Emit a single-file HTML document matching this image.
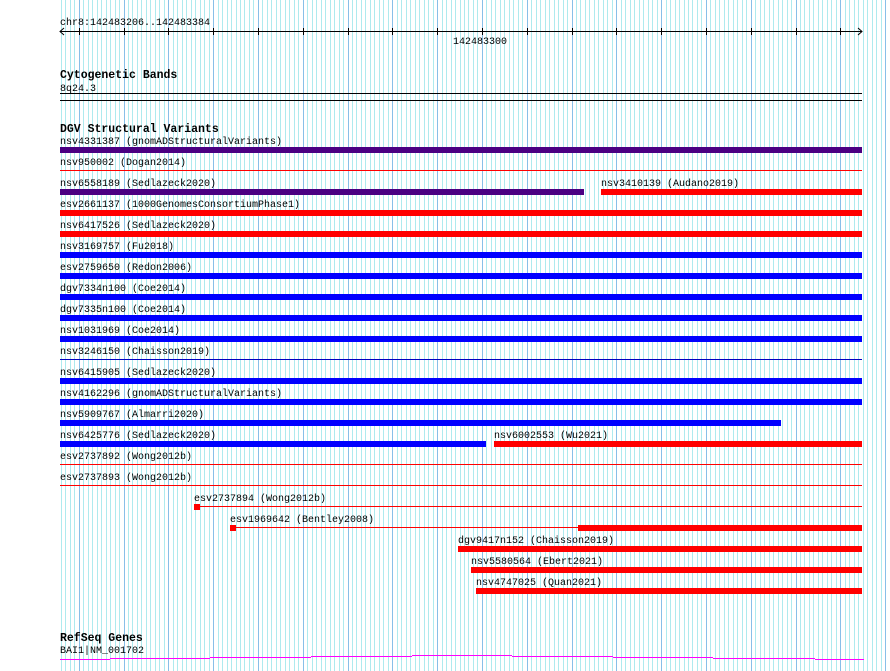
<!DOCTYPE html>
<html><head><meta charset="utf-8"><style>
html,body{margin:0;padding:0;background:#fff;}
svg{display:block;}
text{font-family:"Liberation Mono",monospace;font-size:10px;fill:#000;}
.h{font-weight:bold;font-size:11.5px;}
</style></head><body>
<svg id="s" width="890" height="671" xmlns="http://www.w3.org/2000/svg">
<g id="grid"></g>
<text x="60" y="25">chr8:142483206..142483384</text>
<line x1="60" y1="31.5" x2="862" y2="31.5" stroke="#000"/>
<polyline points="64,28 60,31.5 64,35" fill="none" stroke="#000"/>
<polyline points="858,28 862,31.5 858,35" fill="none" stroke="#000"/>
<g id="ticks"></g>
<text x="453" y="44">142483300</text>
<text class="h" x="60" y="78">Cytogenetic Bands</text>
<text x="60" y="91">8q24.3</text>
<rect x="60" y="93" width="802" height="1" fill="#000"/>
<rect x="60" y="100" width="802" height="1" fill="#000"/>
<text class="h" x="60" y="132">DGV Structural Variants</text>
<g id="rows"></g>
<text class="h" x="60" y="641">RefSeq Genes</text>
<text x="60" y="653">BAI1|NM_001702</text>
<g fill="#f0f">
<rect x="60" y="659" width="50" height="1"/>
<rect x="110" y="658" width="100" height="1"/>
<rect x="210" y="657" width="101" height="1"/>
<rect x="311" y="656" width="101" height="1"/>
<rect x="412" y="655" width="100" height="1"/>
<rect x="512" y="656" width="101" height="1"/>
<rect x="613" y="657" width="100" height="1"/>
<rect x="713" y="658" width="102" height="1"/>
<rect x="815" y="659" width="49" height="1"/>
</g>
</svg>
<script>
var NS="http://www.w3.org/2000/svg";
function el(p,t,a){var e=document.createElementNS(NS,t);for(var k in a)e.setAttribute(k,a[k]);p.appendChild(e);return e;}
var g=document.getElementById('grid'),tk=document.getElementById('ticks');
var w=4.48,x0=78.7;
for(var k=-5;k<200;k++){var x=x0+k*w;if(x<59||x>889)continue;
 var dark=(k%10===0);
 var xr=Math.round(x);
 el(g,'rect',{x:xr,y:0,width:1,height:671,fill:dark?'#88bfe8':'#aeeaee'});
 if(dark&&x<862) el(tk,'rect',{x:xr,y:28,width:1,height:7,fill:'#000'});
}
var R=document.getElementById('rows');
var P='#4b0082',B='#0000ff',Rd='#ff0000';
function bar(x1,x2,y,c){el(R,'rect',{x:x1,y:y,width:x2-x1,height:6,fill:c});}
function thin(x1,x2,y,c){el(R,'rect',{x:x1,y:y,width:x2-x1,height:1,fill:c});}
function lab(x,y,t){var e=el(R,'text',{x:x,y:y});e.textContent=t;}
var rows=[
 ['nsv4331387 (gnomADStructuralVariants)',P,'bar'],
 ['nsv950002 (Dogan2014)',Rd,'thin'],
 ['nsv6558189 (Sedlazeck2020)',P,'part'],
 ['esv2661137 (1000GenomesConsortiumPhase1)',Rd,'bar'],
 ['nsv6417526 (Sedlazeck2020)',Rd,'bar'],
 ['nsv3169757 (Fu2018)',B,'bar'],
 ['esv2759650 (Redon2006)',B,'bar'],
 ['dgv7334n100 (Coe2014)',B,'bar'],
 ['dgv7335n100 (Coe2014)',B,'bar'],
 ['nsv1031969 (Coe2014)',B,'bar'],
 ['nsv3246150 (Chaisson2019)','#0000c0','thin'],
 ['nsv6415905 (Sedlazeck2020)',B,'bar'],
 ['nsv4162296 (gnomADStructuralVariants)',B,'bar'],
 ['nsv5909767 (Almarri2020)',B,'b781'],
 ['nsv6425776 (Sedlazeck2020)',B,'part2'],
 ['esv2737892 (Wong2012b)',Rd,'thin'],
 ['esv2737893 (Wong2012b)',Rd,'thin']
];
for(var i=0;i<rows.length;i++){
 var y=147+i*21, r=rows[i];
 lab(60,y-3,r[0]);
 if(r[2]=='bar')bar(60,862,y,r[1]);
 else if(r[2]=='thin')thin(60,862,y+2,r[1]);
 else if(r[2]=='b781')bar(60,781,y,r[1]);
 else if(r[2]=='part'){bar(60,584,y,P);lab(601,y-3,'nsv3410139 (Audano2019)');bar(601,862,y,Rd);}
 else if(r[2]=='part2'){bar(60,486,y,B);lab(494,y-3,'nsv6002553 (Wu2021)');bar(494,862,y,Rd);}
}
lab(194,501,'esv2737894 (Wong2012b)');bar(194,200,504,Rd);thin(200,862,506,Rd);
lab(230,522,'esv1969642 (Bentley2008)');bar(230,236,525,Rd);thin(236,578,527,Rd);bar(578,862,525,Rd);
lab(458,543,'dgv9417n152 (Chaisson2019)');bar(458,862,546,Rd);
lab(471,564,'nsv5580564 (Ebert2021)');bar(471,862,567,Rd);
lab(476,585,'nsv4747025 (Quan2021)');bar(476,862,588,Rd);
</script>
</body></html>
